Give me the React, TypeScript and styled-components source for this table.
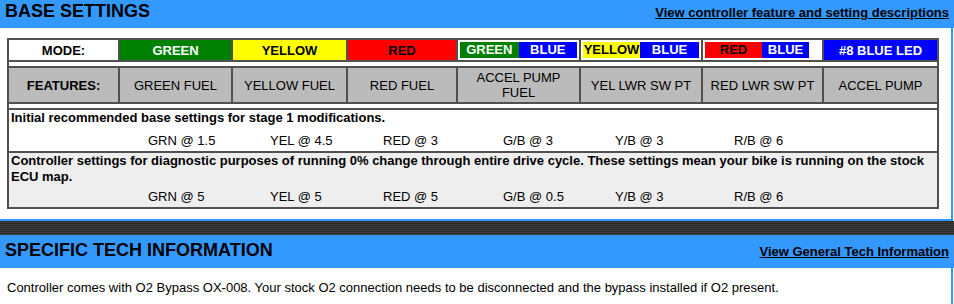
import styled, { createGlobalStyle } from "styled-components";

const GlobalStyle = createGlobalStyle`
  body {
    margin: 0;
    background: #ffffff;
    font-family: "Liberation Sans", Arial, sans-serif;
    font-size: 13px;
    color: #000;
  }
`;

const BLUE_BAR = "#3399ff";
const CELL_BORDER = "#505050";

const SPage = styled.div`
  width: 954px;
`;

const SHeader = styled.div<{ $h: number; $top: number }>`
  height: ${({ $h }) => $h}px;
  box-sizing: border-box;
  padding: ${({ $top }) => $top}px 5px 0 5px;
  background: ${BLUE_BAR};
  display: flex;
  align-items: baseline;
  justify-content: space-between;
`;

const STitle = styled.h2`
  margin: 0;
  font-size: 18px;
  line-height: 18px;
  font-weight: bold;
`;

const SHeadLink = styled.a`
  font-size: 13px;
  font-weight: bold;
  color: #000;
  text-decoration: underline;
`;

const SContent = styled.div<{ $bottom?: boolean }>`
  width: 953px;
  box-sizing: border-box;
  border-right: 2px solid ${BLUE_BAR};
  border-bottom: ${({ $bottom }) => ($bottom ? `2px solid ${BLUE_BAR}` : "none")};
  padding: ${({ $bottom }) => ($bottom ? "10px 0 10px 7px" : "12px 0 10px 7px")};
`;

const SStripes = styled.div`
  height: 14px;
  background: repeating-linear-gradient(
    to bottom,
    #2b2b2b 0px,
    #2b2b2b 1px,
    #3d3d3d 1px,
    #3d3d3d 2px
  );
`;

const STable = styled.table`
  width: 930px;
  table-layout: fixed;
  border-collapse: collapse;
  border: 2px solid ${CELL_BORDER};
`;

const SCell = styled.td<{ $bg?: string; $color?: string; $bold?: boolean; $h?: number }>`
  border: 2px solid ${CELL_BORDER};
  background: ${({ $bg }) => $bg || "#ffffff"};
  color: ${({ $color }) => $color || "#000"};
  font-weight: ${({ $bold }) => ($bold ? "bold" : "normal")};
  height: ${({ $h }) => $h || 20}px;
  padding: 0 4px;
  text-align: center;
  vertical-align: middle;
  line-height: 15px;
`;

const SSpacer = styled.td`
  border: 2px solid ${CELL_BORDER};
  height: 4px;
  padding: 0;
`;

const SMixedCell = styled.td`
  border: 2px solid ${CELL_BORDER};
  background: #ffffff;
  padding: 2px;
  height: 16px;
`;

const SMixed = styled.div<{ $w?: number }>`
  display: flex;
  height: 16px;
  width: ${({ $w }) => ($w ? `${$w}px` : "100%")};
`;

const SHalf = styled.span<{ $bg: string; $color: string; $w?: number }>`
  flex: ${({ $w }) => ($w ? `0 0 ${$w}px` : "1 1 0")};
  background: ${({ $bg }) => $bg};
  color: ${({ $color }) => $color};
  font-weight: bold;
  text-align: center;
  line-height: 16px;
  white-space: nowrap;
`;

const SNoteCell = styled.td<{ $bg: string }>`
  border: 2px solid ${CELL_BORDER};
  background: ${({ $bg }) => $bg};
  padding: 0 2px 2px 2px;
  text-align: left;
  line-height: 16px;
`;

const SNote = styled.div`
  font-weight: bold;
`;

const SValues = styled.div<{ $gap: number }>`
  display: grid;
  grid-template-columns: 122px 113px 120px 112px 119px auto;
  padding: ${({ $gap }) => $gap}px 0 0 137px;
`;

const SBody = styled.div`
  line-height: 16px;
`;

const colWidths = [111, 113, 115, 110, 123, 122, 121, 115];

const features = [
  "GREEN FUEL",
  "YELLOW FUEL",
  "RED FUEL",
  "ACCEL PUMP FUEL",
  "YEL LWR SW PT",
  "RED LWR SW PT",
  "ACCEL PUMP",
];

const notes = [
  {
    text: "Initial recommended base settings for stage 1 modifications.",
    values: ["GRN @ 1.5", "YEL @ 4.5", "RED @ 3", "G/B @ 3", "Y/B @ 3", "R/B @ 6"],
    bg: "#ffffff",
    gap: 7,
  },
  {
    text:
      "Controller settings for diagnostic purposes of running 0% change through entire drive cycle. These settings mean your bike is running on the stock ECU map.",
    values: ["GRN @ 5", "YEL @ 5", "RED @ 5", "G/B @ 0.5", "Y/B @ 3", "R/B @ 6"],
    bg: "#eeeeee",
    gap: 4,
  },
];

const App = () => {
  return (
    <>
      <GlobalStyle />
      <SPage>
        <SHeader $h={28} $top={2}>
          <STitle>BASE SETTINGS</STitle>
          <SHeadLink href="#">View controller feature and setting descriptions</SHeadLink>
        </SHeader>
        <SContent $bottom>
          <STable>
            <colgroup>
              {colWidths.map((w, i) => (
                <col key={i} style={{ width: w }} />
              ))}
            </colgroup>
            <tbody>
              <tr>
                <SCell $bold>MODE:</SCell>
                <SCell $bold $bg="#008000" $color="#ffffff">GREEN</SCell>
                <SCell $bold $bg="#ffff00">YELLOW</SCell>
                <SCell $bold $bg="#ff0000">RED</SCell>
                <SMixedCell>
                  <SMixed>
                    <SHalf $bg="#008000" $color="#ffffff">GREEN</SHalf>
                    <SHalf $bg="#0000ff" $color="#ffffff">BLUE</SHalf>
                  </SMixed>
                </SMixedCell>
                <SMixedCell>
                  <SMixed>
                    <SHalf $bg="#ffff00" $color="#000" $w={57}>YELLOW</SHalf>
                    <SHalf $bg="#0000ff" $color="#ffffff">BLUE</SHalf>
                  </SMixed>
                </SMixedCell>
                <SMixedCell>
                  <SMixed $w={104}>
                    <SHalf $bg="#ff0000" $color="#000" $w={57}>RED</SHalf>
                    <SHalf $bg="#0000ff" $color="#ffffff">BLUE</SHalf>
                  </SMixed>
                </SMixedCell>
                <SCell $bold $bg="#0000ff" $color="#ffffff">#8 BLUE LED</SCell>
              </tr>
              <tr>
                <SSpacer colSpan={8} />
              </tr>
              <tr>
                <SCell $bold $bg="#bbbbbb" $h={34}>FEATURES:</SCell>
                {features.map((f) => (
                  <SCell key={f} $bg="#bbbbbb" $h={34}>{f}</SCell>
                ))}
              </tr>
              <tr>
                <SSpacer colSpan={8} />
              </tr>
              {notes.map((n) => (
                <tr key={n.text}>
                  <SNoteCell colSpan={8} $bg={n.bg}>
                    <SNote>{n.text}</SNote>
                    <SValues $gap={n.gap}>
                      {n.values.map((v) => (
                        <span key={v}>{v}</span>
                      ))}
                    </SValues>
                  </SNoteCell>
                </tr>
              ))}
            </tbody>
          </STable>
        </SContent>
        <SStripes />
        <SHeader $h={33} $top={6}>
          <STitle>SPECIFIC TECH INFORMATION</STitle>
          <SHeadLink href="#">View General Tech Information</SHeadLink>
        </SHeader>
        <SContent>
          <SBody>
            Controller comes with O2 Bypass OX-008. Your stock O2 connection needs to be
            disconnected and the bypass installed if O2 present.
          </SBody>
        </SContent>
      </SPage>
    </>
  );
};

export default App;
